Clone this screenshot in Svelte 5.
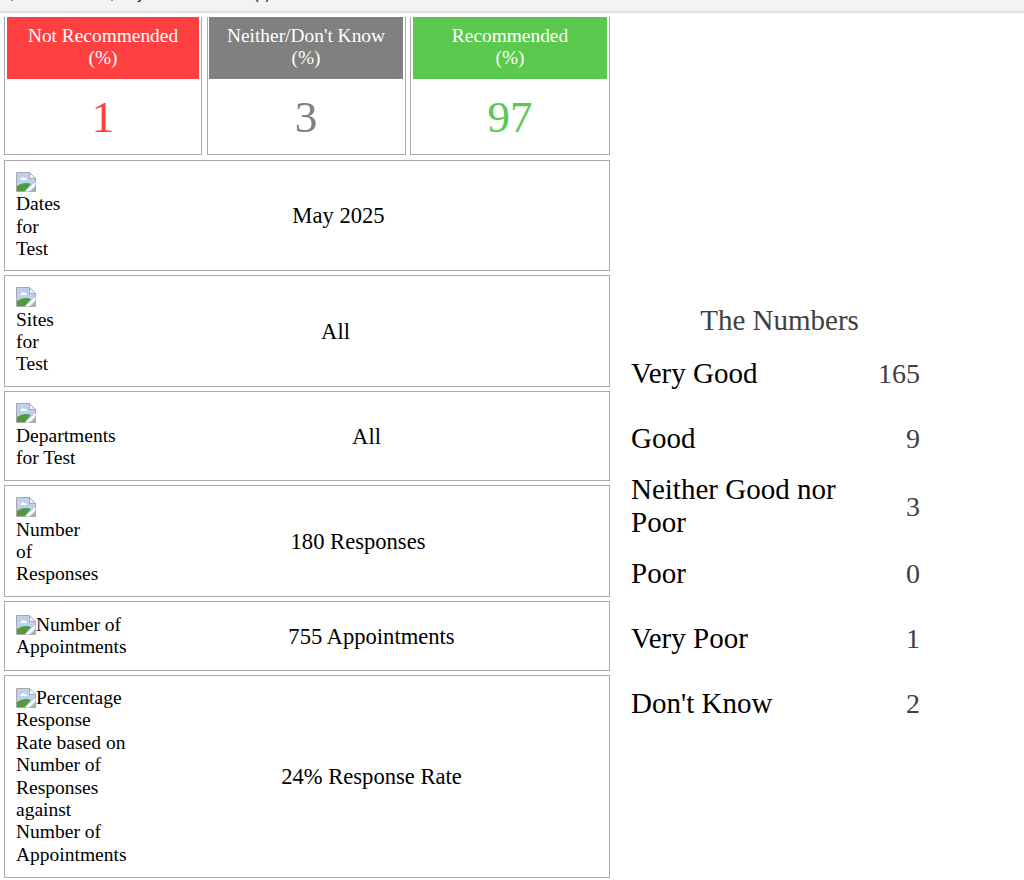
<script>
  const cards = [
    { title: 'Not Recommended', value: 1, kind: 'red' },
    { title: "Neither/Don't Know", value: 3, kind: 'grey' },
    { title: 'Recommended', value: 97, kind: 'green' }
  ];

  const rows = [
    { label: 'Dates for Test', width: 46, value: 'May 2025', shift: 6, height: 111 },
    { label: 'Sites for Test', width: 46, value: 'All', shift: 0, height: 112 },
    { label: 'Departments for Test', width: 108, value: 'All', shift: 0, height: 90 },
    { label: 'Number of Responses', width: 83, value: '180 Responses', shift: 8, height: 112 },
    { label: 'Number of Appointments', width: 111, value: '755 Appointments', shift: 7, height: 70 },
    { label: 'Percentage Response Rate based on Number of Responses against Number of Appointments', width: 111, value: '24% Response Rate', shift: 7, height: 203 }
  ];

  const numbers = [
    { label: 'Very Good', value: 165 },
    { label: 'Good', value: 9 },
    { label: 'Neither Good nor Poor', value: 3 },
    { label: 'Poor', value: 0 },
    { label: 'Very Poor', value: 1 },
    { label: "Don't Know", value: 2 }
  ];
</script>

<div class="topbar">
  <div class="topbar-text">A, Hull Trust Area, May 2025 Results for (x)</div>
</div>

<div class="page">
  <div class="left">
    <div class="cards">
      {#each cards as card}
        <div class="card">
          <div class="card-title {card.kind}">{card.title}<br />(%)</div>
          <div class="card-value {card.kind}-text">{card.value}</div>
        </div>
      {/each}
    </div>

    {#each rows as row}
      <div class="row" style="height: {row.height}px">
        <div class="row-label" style="width: {row.width}px">
          <svg class="broken" width="20" height="20" viewBox="0 0 20 20">
            <path d="M0.5 0.5H13.5L19.5 6.5V19.5H0.5Z" fill="#bcd0f0" stroke="#a9a9a9" />
            <path d="M13.5 0.5V6.5H19.5Z" fill="#f4f4f4" stroke="#a9a9a9" />
            <path d="M4 8Q6 4 9 6Q11 6 11 8Z" fill="#fff" />
            <path d="M1 19V14Q8 9 15 12L9 19Z" fill="#4f9a3a" />
            <path d="M19.5 10V13L13 19.5H9Z" fill="#fff" />
            <path d="M19 15L15.5 19H19Z" fill="#9fb89a" />
          </svg>{row.label}
        </div>
        <div class="row-value" style="margin-left: {row.shift}px">{row.value}</div>
      </div>
    {/each}
  </div>

  <div class="right">
    <div class="numbers-title">The Numbers</div>
    {#each numbers as item}
      <div class="number-row">
        <div class="number-label">{item.label}</div>
        <div class="number-value">{item.value}</div>
      </div>
    {/each}
  </div>
</div>

<style>
  :global(body) {
    background: #fff;
    font-family: "Liberation Serif", "Times New Roman", serif;
    color: #000;
  }

  .topbar {
    height: 11px;
    background: #f3f3f3;
    border-bottom: 2px solid #dedede;
    margin-bottom: 4px;
    overflow: hidden;
  }

  .topbar-text {
    margin-top: -13px;
    padding-left: 1px;
    font-family: "Liberation Sans", Arial, sans-serif;
    font-size: 14px;
    line-height: 14px;
    white-space: nowrap;
  }

  .page {
    display: flex;
    align-items: stretch;
    padding-left: 4px;
  }

  .left {
    width: 606px;
    display: flex;
    flex-direction: column;
    gap: 4px;
    flex-shrink: 0;
  }

  .cards {
    display: grid;
    grid-template-columns: 198px 200px 200px;
    gap: 4px;
    height: 138px;
    margin-bottom: 1px;
  }

  .card {
    border: 1px solid #aaa;
    border-top: none;
    padding: 0 2px;
    text-align: center;
  }

  .card:nth-child(2) {
    margin-left: 1px;
    padding-left: 1px;
  }

  .card-title {
    height: 62px;
    box-sizing: border-box;
    padding-top: 8px;
    font-size: 19.4px;
    line-height: 22.4px;
    color: #fff;
  }

  .red { background: #ff4040; }
  .grey { background: #808080; }
  .green { background: #5bc94d; }
  .red-text { color: #ff4040; }
  .grey-text { color: #808080; }
  .green-text { color: #5bc94d; }

  .card-value {
    font-size: 45px;
    line-height: 52px;
    padding-top: 12px;
  }

  .row {
    display: flex;
    align-items: center;
    box-sizing: border-box;
    border: 1px solid #aaa;
    padding: 0 0 0 11px;
    font-size: 19.5px;
    line-height: 22.4px;
  }

  .row-label {
    flex-shrink: 0;
  }

  .broken {
    vertical-align: top;
    margin-top: 1px;
  }

  .row-value {
    flex: 1;
    padding-top: 2px;
    text-align: center;
    font-size: 22.6px;
  }

  .right {
    margin-left: 21px;
    width: 289px;
    padding-top: 287px;
  }

  .numbers-title {
    font-size: 29px;
    line-height: 32px;
    color: #404040;
    text-align: center;
    margin-bottom: 5px;
    padding-left: 8px;
  }

  .number-row {
    display: flex;
    align-items: center;
    justify-content: space-between;
    box-sizing: border-box;
    min-height: 65px;
    padding: 2px 0;
    font-size: 29px;
    line-height: 33px;
  }

  .number-label {
    width: 230px;
  }

  .number-value {
    color: #404040;
    font-size: 28px;
  }
</style>
